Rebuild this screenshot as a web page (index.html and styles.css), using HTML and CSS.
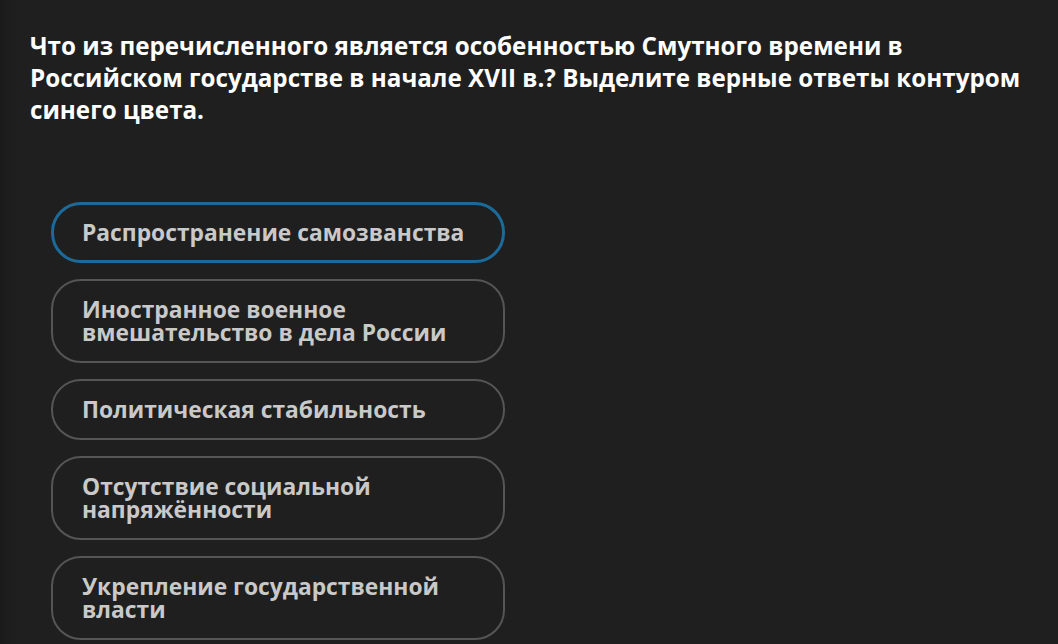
FILE: index.html
```html
<!DOCTYPE html>
<html lang="ru">
<head>
<meta charset="utf-8">
<link rel="stylesheet" href="styles.css">
</head>
<body>
<main class="page">
  <h1 class="question">Что из перечисленного является особенностью Смутного времени в Российском государстве в начале XVII в.? Выделите верные ответы контуром синего цвета.</h1>
  <div class="options">
    <div class="option selected">Распространение самозванства</div>
    <div class="option">Иностранное военное вмешательство в дела России</div>
    <div class="option">Политическая стабильность</div>
    <div class="option">Отсутствие социальной напряжённости</div>
    <div class="option">Укрепление государственной власти</div>
  </div>
</main>
</body>
</html>
```
FILE: styles.css
```css
html, body {
  margin: 0;
  padding: 0;
  height: 100%;
}
body {
  background: linear-gradient(to right, #1a1a1a 0px, #1d1d1d 8px, #1f1f1f 16px, #1f1f1f 100%);
  font-family: "Open Sans", "Noto Sans", sans-serif;
  overflow: hidden;
}
.page {
  padding: 30px 28px 0 30px;
}
.question {
  margin: 0;
  font-size: 24.2px;
  line-height: 32px;
  font-weight: 700;
  color: #ffffff;
  max-width: 1000px;
}
.options {
  display: flex;
  flex-direction: column;
  gap: 16px;
  margin-top: 76px;
  margin-left: 21px;
  width: 454px;
}
.option {
  box-sizing: border-box;
  border: 2px solid #555555;
  border-radius: 30px;
  padding: 17px 28px 17px 29px;
  font-size: 22.8px;
  line-height: 23px;
  font-weight: 700;
  color: #c9c9c9;
}
.option.selected {
  border: 3px solid #1c6a99;
  padding: 16px 28px 16px 28px;
}
```
